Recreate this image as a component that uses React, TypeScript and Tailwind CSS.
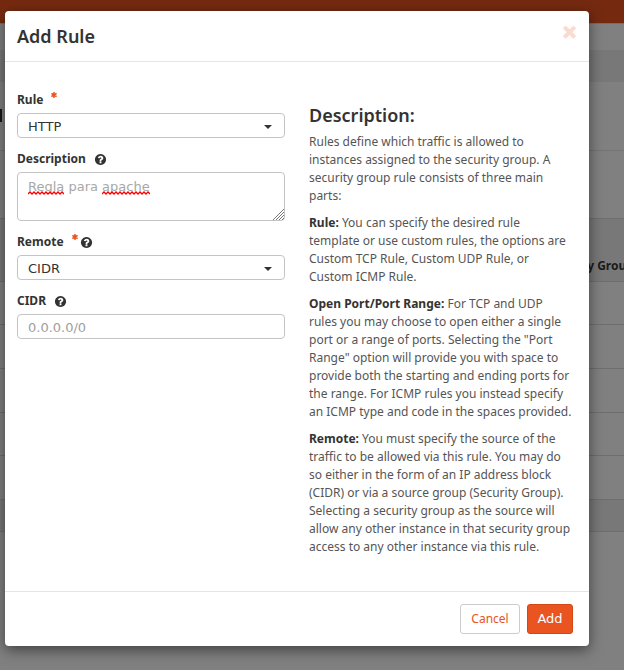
import { useState } from "react";
import type { ReactNode } from "react";

const fieldClass =
  "block w-full appearance-none rounded border border-[#c4c4c4] bg-white px-[10px] font-['DejaVu_Sans',sans-serif] text-[13px] outline-none";

function HelpIcon() {
  return (
    <svg viewBox="0 0 1792 1792" className="size-[13px]" fill="currentColor" aria-hidden="true">
      <path d="M1024 1376v-192q0-14-9-23t-23-9h-192q-14 0-23 9t-9 23v192q0 14 9 23t23 9h192q14 0 23-9t9-23zm256-672q0-88-55.5-163t-138.5-116-170-41q-243 0-371 213-15 24 8 42l132 100q7 6 19 6 16 0 25-12 53-68 86-92 34-24 86-24 48 0 85.5 26t37.5 59q0 38-20 61t-68 45q-63 28-115.5 86.5t-52.5 125.5v36q0 14 9 23t23 9h192q14 0 23-9t9-23q0-19 21.5-49.5t54.5-49.5q32-18 49-28.5t46-35 44.5-48 28-60.5 12.5-81zm384 192q0 209-103 385.5t-279.5 279.5-385.5 103-385.5-103-279.5-279.5-103-385.5 103-385.5 279.5-279.5 385.5-103 385.5 103 279.5 279.5 103 385.5z" />
    </svg>
  );
}

function RequiredMark() {
  return (
    <svg viewBox="0 0 10 10" className="mb-[10px] size-[6px]" stroke="#e95420" strokeWidth="2.6" strokeLinecap="round" aria-hidden="true">
      <path d="M5 1v8M1.5 3l7 4M8.5 3l-7 4" />
    </svg>
  );
}

function CloseIcon() {
  return (
    <svg viewBox="0 0 1792 1792" className="size-[19px]" fill="currentColor" aria-hidden="true">
      <path d="M1490 1322q0 40-28 68l-136 136q-28 28-68 28t-68-28l-294-294-294 294q-28 28-68 28t-68-28l-136-136q-28-28-28-68t28-68l294-294-294-294q-28-28-28-68t28-68l136-136q28-28 68-28t68 28l294 294 294-294q28-28 68-28t68 28l136 136q28 28 28 68t-28 68l-294 294 294 294q28 28 28 68z" />
    </svg>
  );
}

/** Zigzag underline used for misspelled words. */
function Squiggle({ width, className }: { width: number; className: string }) {
  let d = "M0 3";
  for (let x = 2, up = true; x <= width; x += 2, up = !up) d += `L${x} ${up ? 1 : 3}`;
  return (
    <svg width={width} height="4" className={className} fill="none" stroke="#f00" strokeWidth="1.3" aria-hidden="true">
      <path d={d} />
    </svg>
  );
}

function Field({ id, label, required, help, children }: { id: string; label: string; required?: boolean; help?: boolean; children: ReactNode }) {
  return (
    <div>
      <div className="mb-1 flex h-[18px] items-center gap-2">
        <label htmlFor={id} className="text-[12px] leading-[18px] font-bold">
          {label}
        </label>
        <span className="flex items-center gap-[2px]">
          {required && <RequiredMark />}
          {help && <HelpIcon />}
        </span>
      </div>
      {children}
    </div>
  );
}

function Select({ id, options }: { id: string; options: string[] }) {
  return (
    <div className="relative">
      <select id={id} className={`${fieldClass} h-[25px] pt-[3px] text-[#333]`}>
        {options.map((o) => (
          <option key={o}>{o}</option>
        ))}
      </select>
      <svg viewBox="0 0 8 4" className="pointer-events-none absolute top-3 right-[13px] h-1 w-2" fill="#333" aria-hidden="true">
        <path d="M0 0h8L4 4z" />
      </svg>
    </div>
  );
}

function Backdrop() {
  return (
    <div className="absolute inset-0 overflow-hidden bg-[#808080]" aria-hidden="true">
      <div className="h-[23px] bg-[#752a10]" />
      <div className="h-[27px] border-t border-[#6f6f6f]" />
      <div className="h-8 bg-[#787878]" />
      <div className="h-[69px] border-b border-[#747474] pt-[27px]">
        <div className="h-[13px] w-[2px] bg-[#14191c]" />
      </div>
      <div className="h-[67px]" />
      <div className="flex h-[63px] items-end justify-end overflow-hidden border-t border-[#6e6e6e] bg-[#787878] pb-[6px]">
        <div className="w-[42px] text-[12px] leading-[18px] font-bold whitespace-nowrap text-[#1a1a1a]">ty Group</div>
      </div>
      <div className="h-[43px] border-t border-[#6e6e6e]" />
      <div className="h-11 border-t border-[#6e6e6e]" />
      <div className="h-11 border-t border-[#6e6e6e]" />
      <div className="h-[43px] border-t border-[#6e6e6e]" />
      <div className="h-11 border-t border-[#6e6e6e]" />
      <div className="h-[33px] border-y border-[#6e6e6e] bg-[#787878]" />
    </div>
  );
}

export default function App() {
  const [text, setText] = useState("Regla para apache");
  return (
    <div className="relative min-h-screen pt-[11px] pr-[35px] pb-6 pl-[5px] font-['Noto_Sans',sans-serif] text-[#333]">
      <Backdrop />
      <form
        role="dialog"
        aria-labelledby="title"
        onSubmit={(e) => e.preventDefault()}
        className="relative rounded bg-white shadow-[0_4px_14px_rgba(0,0,0,0.5)]"
      >
        <header className="flex h-[51px] items-center justify-between border-b border-[#e5e5e5] pr-[10px] pl-3">
          <h1 id="title" className="text-[18px] leading-6 font-semibold">
            Add Rule
          </h1>
          <button type="button" aria-label="Close" className="mb-[9px] text-[#fbdacf]">
            <CloseIcon />
          </button>
        </header>

        <div className="grid grid-cols-2 gap-6 px-3 pt-[29px] pb-9">
          <div className="flex flex-col gap-3">
            <Field id="rule" label="Rule" required>
              <Select id="rule" options={["HTTP", "HTTPS", "SSH", "Custom TCP Rule"]} />
            </Field>
            <Field id="description" label="Description" help>
              <div className="relative">
                <textarea
                  id="description"
                  spellCheck={false}
                  value={text}
                  onChange={(e) => setText(e.target.value)}
                  className={`${fieldClass} h-[49px] resize-none pt-[5px] leading-[18px] text-[#a8a8a8]`}
                />
                <Squiggle width={36} className="pointer-events-none absolute top-[19px] left-[11px]" />
                <Squiggle width={48} className="pointer-events-none absolute top-[19px] left-[85px]" />
                <svg viewBox="0 0 11 11" className="pointer-events-none absolute right-[1px] bottom-[1px] size-[11px]" stroke="#777" aria-hidden="true">
                  <path d="M0 11L11 0M3 11l8-8M6 11l5-5M9 11l2-2" />
                </svg>
              </div>
            </Field>
            <Field id="remote" label="Remote" required help>
              <Select id="remote" options={["CIDR", "Security Group"]} />
            </Field>
            <Field id="cidr" label="CIDR" help>
              <input id="cidr" type="text" placeholder="0.0.0.0/0" className={`${fieldClass} h-[25px] pt-[2px] placeholder:text-[#a0a0a0]`} />
            </Field>
          </div>

          <div className="pt-3 pr-1 text-[12px] leading-[18px] text-[#555]">
            <h2 className="mb-[6px] text-[18px] leading-6 font-semibold text-[#333]">Description:</h2>
            <p className="mb-[9px]">
              Rules define which traffic is allowed to instances assigned to the security group. A security group rule consists of three main parts:
            </p>
            <p className="mb-[9px]">
              <b className="text-[#333]">Rule:</b> You can specify the desired rule template or use custom rules, the options are Custom TCP Rule, Custom UDP Rule, or Custom ICMP Rule.
            </p>
            <p className="mb-[9px]">
              <b className="text-[#333]">Open Port/Port Range:</b> For TCP and UDP rules you may choose to open either a single port or a range of ports. Selecting the "Port Range" option will provide you with space to provide both the starting and ending ports for the range. For ICMP rules you instead specify an ICMP type and code in the spaces provided.
            </p>
            <p>
              <b className="text-[#333]">Remote:</b> You must specify the source of the traffic to be allowed via this rule. You may do so either in the form of an IP address block (CIDR) or via a source group (Security Group). Selecting a security group as the source will allow any other instance in that security group access to any other instance via this rule.
            </p>
          </div>
        </div>

        <footer className="-mt-px flex justify-end gap-[7px] border-t border-[#e5e5e5] px-4 py-3">
          <button type="button" className="h-[30px] w-[60px] rounded-[3px] border border-[#ccc] bg-white text-[12px] text-[#e95420]">
            Cancel
          </button>
          <button type="submit" className="h-[30px] w-[46px] rounded-[3px] border border-[#d34615] bg-[#e95420] font-['DejaVu_Sans',sans-serif] text-[13px] text-white">
            Add
          </button>
        </footer>
      </form>
    </div>
  );
}
